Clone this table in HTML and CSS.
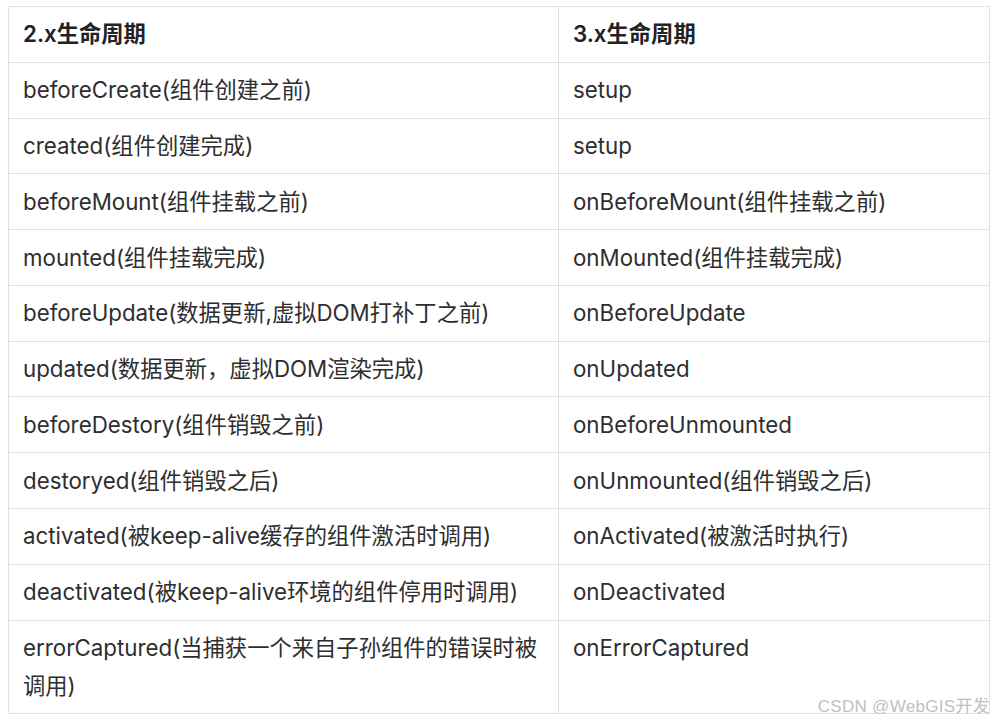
FILE: index.html
```html
<!DOCTYPE html>
<html lang="zh-CN">
<head>
<meta charset="utf-8">
<title>Vue 生命周期对比</title>
<link rel="stylesheet" href="styles.css">
</head>
<body>
<table class="lc">
  <colgroup><col class="c1"><col class="c2"></colgroup>
  <thead>
    <tr><th>2.x生命周期</th><th>3.x生命周期</th></tr>
  </thead>
  <tbody>
    <tr><td>beforeCreate(组件创建之前)</td><td>setup</td></tr>
    <tr><td>created(组件创建完成)</td><td>setup</td></tr>
    <tr><td>beforeMount(组件挂载之前)</td><td>onBeforeMount(组件挂载之前)</td></tr>
    <tr><td>mounted(组件挂载完成)</td><td>onMounted(组件挂载完成)</td></tr>
    <tr><td>beforeUpdate(数据更新,虚拟DOM打补丁之前)</td><td>onBeforeUpdate</td></tr>
    <tr><td>updated(数据更新，虚拟DOM渲染完成)</td><td>onUpdated</td></tr>
    <tr><td>beforeDestory(组件销毁之前)</td><td>onBeforeUnmounted</td></tr>
    <tr><td>destoryed(组件销毁之后)</td><td>onUnmounted(组件销毁之后)</td></tr>
    <tr><td>activated(被keep-alive缓存的组件激活时调用)</td><td>onActivated(被激活时执行)</td></tr>
    <tr><td>deactivated(被keep-alive环境的组件停用时调用)</td><td>onDeactivated</td></tr>
    <tr><td>errorCaptured(当捕获一个来自子孙组件的错误时被调用)</td><td class="top">onErrorCaptured</td></tr>
  </tbody>
</table>
<div class="wm">CSDN @WebGIS开发</div>
</body>
</html>
```

FILE: styles.css
```css
html, body {
  background: #ffffff;
}
body {
  margin: 6px 8px;
  font-family: Inter, "Noto Sans CJK SC", sans-serif;
  color: #2e2e2e;
}
.lc {
  border-collapse: collapse;
  table-layout: fixed;
  width: 981px;
  font-size: 22.3px;
}
.c1 { width: 550px; }
.c2 { width: 431px; }
.lc th,
.lc td {
  border: 1.5px solid #e1e1e1;
  padding: 8.4px 14px;
  line-height: 38px;
  text-align: left;
  vertical-align: middle;
  word-break: break-all;
}
.lc th {
  font-weight: 600;
  color: #222222;
}
.lc td.top {
  vertical-align: top;
}
.wm {
  position: absolute;
  right: 8px;
  top: 692px;
  font-size: 17px;
  color: #c0c0c0;
  font-family: "Liberation Sans", "Noto Sans CJK SC", sans-serif;
  letter-spacing: 0.3px;
}
```
